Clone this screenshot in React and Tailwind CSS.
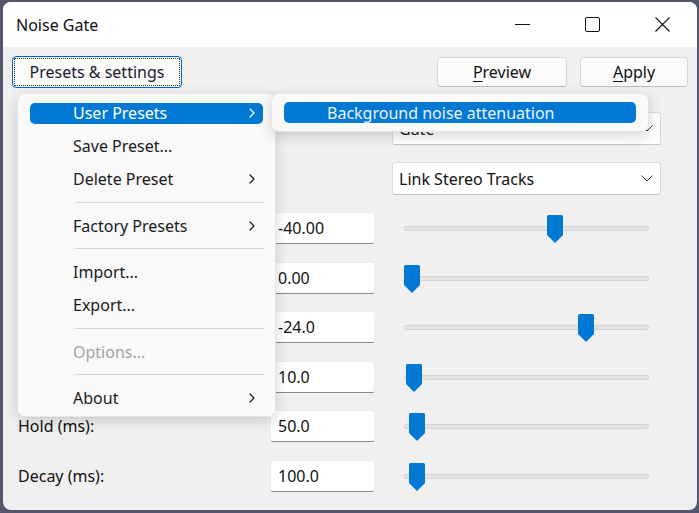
import React from 'react';

const Chevron = ({ color = '#1a1a1a' }) => (
  <svg width="6" height="10" viewBox="0 0 6 10" fill="none">
    <path d="M1 1 L5 5 L1 9" stroke={color} strokeWidth="1.2" strokeLinecap="round" strokeLinejoin="round" />
  </svg>
);

const Thumb = () => (
  <svg width="16" height="28" viewBox="0 0 16 28">
    <path d="M1.5 0 H14.5 Q16 0 16 1.5 V20 L8 28 L0 20 V1.5 Q0 0 1.5 0 Z" fill="#0078d4" />
  </svg>
);

const Combo = ({ value }) => (
  <div className="w-[269px] h-[33px] bg-white border border-[#dcdcdc] border-b-[#c4c4c4] rounded-[3px] flex items-center justify-between pl-[6px] pr-[7px]">
    <span>{value}</span>
    <svg width="12" height="7" viewBox="0 0 12 7" fill="none">
      <path d="M0.5 0.5 L6 6 L11.5 0.5" stroke="#333" strokeWidth="1" />
    </svg>
  </div>
);

// labels under the open menu are covered in the screenshot
const sliderRows = [
  { label: 'Gate threshold (dB):', value: '-40.00', pos: 143, covered: true },
  { label: 'Gate frequencies above (kHz):', value: '0.00', pos: 0, covered: true },
  { label: 'Level reduction (dB):', value: '-24.0', pos: 174, covered: true },
  { label: 'Attack (ms):', value: '10.0', pos: 2, covered: true },
  { label: 'Hold (ms):', value: '50.0', pos: 5 },
  { label: 'Decay (ms):', value: '100.0', pos: 5 },
];

const menuItems = [
  { label: 'User Presets', sub: true, active: true },
  { label: 'Save Preset...' },
  { label: 'Delete Preset', sub: true },
  { sep: true },
  { label: 'Factory Presets', sub: true },
  { sep: true },
  { label: 'Import...' },
  { label: 'Export...' },
  { sep: true },
  { label: 'Options...', disabled: true },
  { sep: true },
  { label: 'About', sub: true },
];

export default function App() {
  return (
    <div className="relative w-[699px] h-[513px] bg-[#55556d] pt-[2px] pl-[3px] pr-[2px] pb-[3px] font-['Noto_Sans',sans-serif] text-[16px] text-[#111] leading-none overflow-hidden">
      <div className="h-full flex flex-col rounded-[8px] overflow-hidden bg-[#f0f0f0]">
        {/* title bar */}
        <div className="h-[45px] bg-white flex items-center justify-between shrink-0">
          <span className="pl-[13px]">Noise Gate</span>
          <div className="flex h-full">
            <div className="w-[70px] flex items-center justify-center">
              <div className="w-[15px] h-px bg-[#111]" />
            </div>
            <div className="w-[70px] flex items-center justify-center">
              <div className="w-[15px] h-[15px] border border-[#111] rounded-[2px]" />
            </div>
            <div className="w-[70px] flex items-center justify-center">
              <svg width="15" height="15" viewBox="0 0 15 15" fill="none">
                <path d="M0.5 0.5 L14.5 14.5 M14.5 0.5 L0.5 14.5" stroke="#111" strokeWidth="1.1" />
              </svg>
            </div>
          </div>
        </div>

        {/* header buttons */}
        <div className="mt-[9px] h-[32px] flex items-center justify-between pl-[9px] pr-[9px]">
          <button className="w-[170px] h-[32px] rounded-[4px] border border-[#0067c0] bg-[#fbfbfb] p-px">
            <span className="w-full h-full flex items-center justify-center border border-dotted border-[#333] text-[#1a1a2e]">
              Presets &amp; settings
            </span>
          </button>
          <div className="flex gap-[13px]">
            <button className="w-[130px] h-[30px] rounded-[4px] border border-[#d6d6d6] border-b-[#bcbcbc] bg-[#fbfbfb] flex items-center justify-center">
              <span><span className="underline underline-offset-[3px]">P</span>review</span>
            </button>
            <button className="w-[108px] h-[30px] rounded-[4px] border border-[#d6d6d6] border-b-[#bcbcbc] bg-[#fbfbfb] flex items-center justify-center">
              <span><span className="underline underline-offset-[3px]">A</span>pply</span>
            </button>
          </div>
        </div>

        {/* controls */}
        <div className="mt-[24px] pl-[15px] flex flex-col">
          <div className="flex items-center h-[33px]">
            <span className="w-[374px] invisible">Select Function:</span>
            <Combo value="Gate" />
          </div>
          <div className="flex items-center h-[33px] mt-[17px]">
            <span className="w-[374px] invisible">Stereo Linking:</span>
            <Combo value="Link Stereo Tracks" />
          </div>
          <div className="mt-[17px] flex flex-col gap-[17.5px]">
            {sliderRows.map((r) => (
              <div key={r.label} className="flex items-center h-[32px]">
                <span className={r.covered ? 'w-[252px] invisible' : 'w-[252px]'}>{r.label}</span>
                <div className="w-[105px] h-[32px] bg-white border border-[#ececec] border-b-[#8a8a8a] rounded-[3px] flex items-center pl-[7px]">
                  {r.value}
                </div>
                <div className="relative ml-[29px] w-[245px] h-[32px]">
                  <div className="absolute left-0 right-0 top-[14px] h-[5px] bg-[#e4e4e4] border border-[#d4d4d4] rounded-[2px]" />
                  <div className="absolute top-[3px]" style={{ left: r.pos }}>
                    <Thumb />
                  </div>
                </div>
              </div>
            ))}
          </div>
        </div>
      </div>

      {/* dropdown menu */}
      <div className="absolute left-[17px] top-[93px] w-[259px] h-[324px] bg-[#f9f9f9] rounded-[8px] border border-[#e6e6e6] shadow-[0_4px_14px_rgba(0,0,0,0.16)] pt-[2.5px] pb-[2.5px]">
        {menuItems.map((it, i) =>
          it.sep ? (
            <div key={i} className="h-[13.5px] flex items-center pl-[57px] pr-[11px]">
              <div className="w-full h-px bg-[#d6d6d6]" />
            </div>
          ) : (
            <div key={i} className="h-[33px] px-[12px] flex items-center">
              <div
                className={
                  it.active
                    ? 'w-full h-[21px] rounded-[5px] bg-[#0078d4] text-white flex items-center justify-between pl-[43px] pr-[8px]'
                    : it.disabled
                    ? 'w-full h-[21px] flex items-center justify-between pl-[43px] pr-[8px] text-[#a3a3a3]'
                    : 'w-full h-[21px] flex items-center justify-between pl-[43px] pr-[8px] text-[#1a1a1a]'
                }
              >
                <span>{it.label}</span>
                {it.sub && <Chevron color={it.active ? '#ffffff' : '#1a1a1a'} />}
              </div>
            </div>
          )
        )}
      </div>

      {/* submenu */}
      <div className="absolute left-[271px] top-[93px] w-[378px] h-[39px] bg-[#f9f9f9] rounded-[8px] border border-[#e6e6e6] shadow-[0_4px_14px_rgba(0,0,0,0.16)] px-[12px] py-[8px]">
        <div className="w-full h-[21px] rounded-[5px] bg-[#0078d4] text-[#eef4fb] flex items-center pl-[43px]">
          Background noise attenuation
        </div>
      </div>
    </div>
  );
}
